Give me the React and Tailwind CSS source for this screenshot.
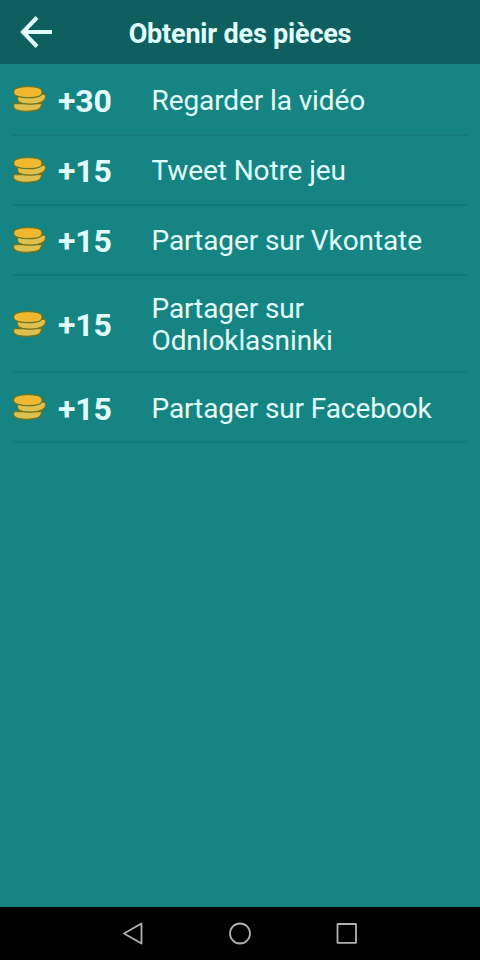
import React from "react";

const rewards = [
    { id: 1, coins: 30, label: "Regarder la vidéo" },
    { id: 2, coins: 15, label: "Tweet Notre jeu" },
    { id: 3, coins: 15, label: "Partager sur Vkontate" },
    { id: 4, coins: 15, label: "Partager sur Odnloklasninki" },
    { id: 5, coins: 15, label: "Partager sur Facebook" },
];

const Coins = () => {
    return (
        <svg className="-mt-[3px] w-[33px] h-[26px] shrink-0" viewBox="0 0 33 26" stroke="#6f7420" strokeWidth="1.300">
            <path d="M1 17.500c-.6 1.500-.5 4 .5 5 2 2 6 2.800 12.500 2.800s11.500-1.300 13-3l2.500-5z" fill="#dcc050" />
            <path d="M4.500 10.500c-.5 2.500 0 4.500 1.500 5.500 4 2.500 17 3 22.500 0 3.500-1.500 4.500-4.500 4-7l-3-1z" fill="#dfc04c" />
            <path d="M0.700 5.500C0.700 2 7 0.700 15 0.700s14 1.300 14 4.800v1.500c0 3.200-6.500 4.700-14 4.700S0.700 10 0.700 7z" fill="#e6bf40" />
            <ellipse cx="14.800" cy="6" rx="12.300" ry="4.200" fill="#f1b72e" stroke="none" />
        </svg>
    );
};

const RewardRow = ({ item }) => {
    return (
        <li className="flex items-center min-h-[70.250px] pt-[17px] pb-[14px] border-b-2 border-[#127a7a]">
            <Coins />
            <span className="ml-3 w-[93.500px] text-[32px] leading-8 font-bold tracking-[-0.200px]">+{item.coins}</span>
            <span className="flex-1 text-[28px] leading-8 tracking-[-0.100px]">{item.label}</span>
        </li>
    );
};

const App = () => {
    return (
        <div className="flex flex-col w-[480px] h-[960px] bg-[#168482] text-[#e2ffff] font-['Roboto',sans-serif]">
            <header className="relative flex items-center justify-center h-16 pt-[3px] shrink-0 bg-[#0f5f60]">
                <svg className="absolute left-5 top-4 w-8 h-8" viewBox="0 0 32 32" fill="none" stroke="currentColor" strokeWidth="4">
                    <path d="M32 16H3M17 1.500L3 16L17 30.500" />
                </svg>
                <h1 className="text-[27px] leading-8 font-bold tracking-[-0.200px]">Obtenir des pièces</h1>
            </header>
            <main className="flex-1 pt-[1.300px] px-[13px]">
                <ul>
                    {
                        rewards.map((item) => <RewardRow key={item.id} item={item} />)
                    }
                </ul>
            </main>
            <nav className="flex items-center justify-center gap-[84px] h-[53px] shrink-0 bg-black">
                <svg className="w-[22px] h-6" viewBox="0 0 22 24" fill="none" stroke="#b0b0b0" strokeWidth="1.800" strokeLinejoin="round">
                    <path d="M19.500 1.500v20L2 11.500z" />
                </svg>
                <svg className="w-6 h-6" viewBox="0 0 24 24" fill="none" stroke="#b0b0b0" strokeWidth="1.800">
                    <circle cx="12" cy="11.500" r="10" />
                </svg>
                <svg className="w-[22px] h-6" viewBox="0 0 22 24" fill="none" stroke="#b0b0b0" strokeWidth="1.800" strokeLinejoin="round">
                    <path d="M1.500 2h18.500v18.800h-18.500z" />
                </svg>
            </nav>
        </div>
    );
};

export default App;
